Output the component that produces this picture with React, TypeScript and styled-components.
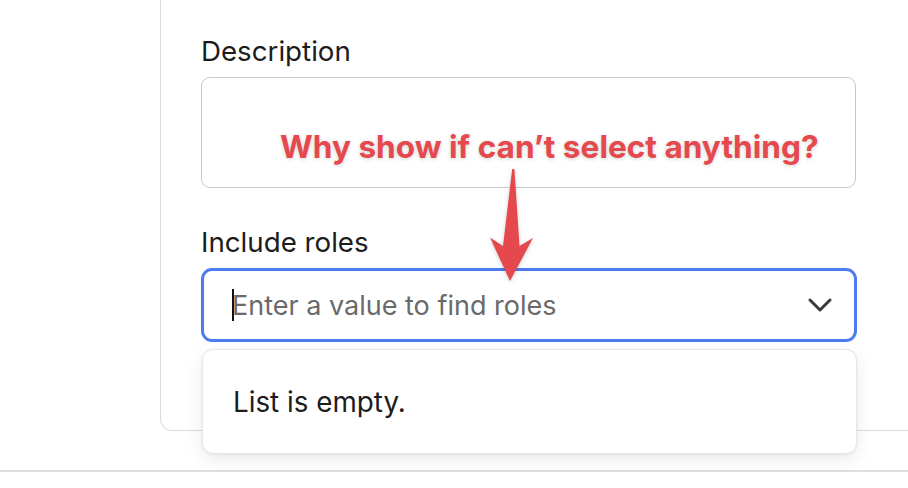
import styled, { createGlobalStyle } from 'styled-components';

const GlobalStyle = createGlobalStyle`
  html, body {
    margin: 0;
    padding: 0;
    background: #ffffff;
  }
  body {
    font-family: Inter, "Noto Sans", "Liberation Sans", sans-serif;
    -webkit-font-smoothing: antialiased;
  }
`;

const Page = styled.div`
  position: relative;
  width: 908px;
  height: 488px;
  overflow: hidden;
  background: #fff;
`;

const Card = styled.section`
  margin-left: 160px;
  padding: 35px 0 88px 40px;
  border-left: 1.5px solid #dadada;
  border-bottom: 1.5px solid #dadada;
  border-bottom-left-radius: 12px;
  display: flex;
  flex-direction: column;
  gap: 38px;
`;

const Field = styled.div`
  position: relative;
  width: 656px;
  display: flex;
  flex-direction: column;
  gap: 10px;
`;

const Label = styled.label`
  font-size: 27.7px;
  line-height: 32px;
  color: #1c1c1c;
`;

const TextArea = styled.div`
  height: 111px;
  box-sizing: border-box;
  border: 1.5px solid #c9c9c9;
  border-radius: 9px;
  width: 655px;
`;

const Combo = styled.div`
  height: 74px;
  box-sizing: border-box;
  border: 3px solid #4d7cf0;
  border-radius: 11px;
  display: flex;
  align-items: center;
  padding: 0 22px 0 28px;
`;

const Caret = styled.span`
  width: 2px;
  height: 32px;
  background: #111;
  margin-right: -2px;
`;

const Placeholder = styled.span`
  flex: 1;
  font-size: 27px;
  color: #6a6a6a;
`;

const Menu = styled.div`
  position: absolute;
  left: 1px;
  right: 0;
  top: 123px;
  height: 105px;
  box-sizing: border-box;
  background: #fff;
  border: 1px solid #e6e6e6;
  border-radius: 11px;
  box-shadow: 0 6px 18px rgba(0, 0, 0, 0.08), 0 1px 3px rgba(0, 0, 0, 0.06);
  display: flex;
  align-items: center;
  padding-left: 30px;
  font-size: 27.8px;
  color: #1c1c1c;
`;

const Divider = styled.div`
  margin-top: 39px;
  height: 1.5px;
  background: #dedede;
`;

const Note = styled.div`
  position: absolute;
  left: 280px;
  top: 127px;
  font-size: 31.6px;
  font-weight: 700;
  color: #e5484d;
  white-space: nowrap;
  text-shadow: 0 1px 4px rgba(0, 0, 0, 0.18);
`;

const Arrow = styled.svg`
  position: absolute;
  left: 0;
  top: 0;
  overflow: visible;
  filter: drop-shadow(0 1px 2px rgba(0, 0, 0, 0.2));
`;

function Chevron() {
  return (
    <svg width="24" height="16" viewBox="0 0 24 16">
      <path d="M2 3 L12 13 L22 3" fill="none" stroke="#3a3a3a" strokeWidth="3" strokeLinecap="round" strokeLinejoin="round" />
    </svg>
  );
}

export default function App() {
  return (
    <>
      <GlobalStyle />
      <Page>
        <Card>
          <Field>
            <Label>Description</Label>
            <TextArea />
          </Field>
          <Field>
            <Label>Include roles</Label>
            <Combo>
              <Caret />
              <Placeholder>Enter a value to find roles</Placeholder>
              <Chevron />
            </Combo>
            <Menu>List is empty.</Menu>
          </Field>
        </Card>
        <Divider />
        <Note>Why show if can’t select anything?</Note>
        <Arrow width="908" height="488">
          <polygon
            points="512.2,169 514.4,169 519.5,246 533,238 510,281 490,237.5 503,246"
            fill="#e5484d"
            strokeLinejoin="round"
          />
        </Arrow>
      </Page>
    </>
  );
}
